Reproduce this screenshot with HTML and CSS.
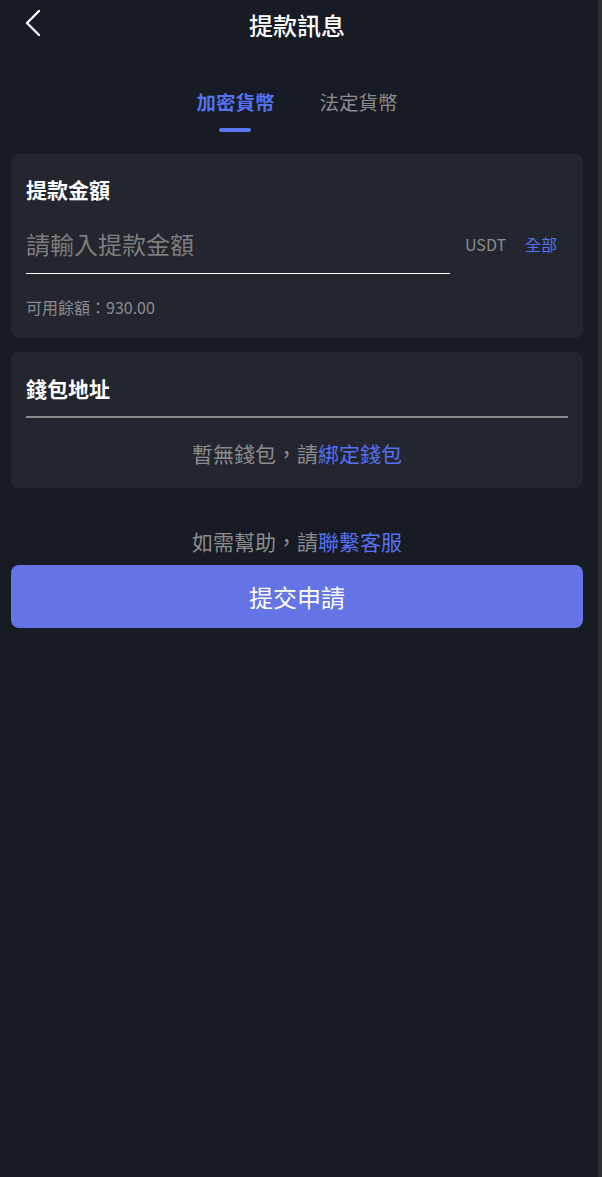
FILE: index.html
```html
<!DOCTYPE html>
<html lang="zh-Hant">
<head>
<meta charset="utf-8">
<link rel="stylesheet" href="styles.css">
</head>
<body>
<div class="page">
  <header class="topbar">
    <span class="back">
      <svg width="18" height="28" viewBox="0 0 18 28"><path d="M15 2 L3 14 L15 26" fill="none" stroke="#fff" stroke-width="2.4" stroke-linecap="round" stroke-linejoin="round"/></svg>
    </span>
    <h1 class="title">提款訊息</h1>
  </header>
  <nav class="tabs">
    <div class="tab active">加密貨幣<span class="indicator"></span></div>
    <div class="tab">法定貨幣</div>
  </nav>
  <section class="card amount">
    <div class="card-title">提款金額</div>
    <div class="input-row">
      <div class="input">請輸入提款金額</div>
      <span class="unit">USDT</span>
      <span class="all">全部</span>
    </div>
    <div class="balance">可用餘額：930.00</div>
  </section>
  <section class="card wallet">
    <div class="card-title">錢包地址</div>
    <div class="divider"></div>
    <div class="empty">暫無錢包，請<span class="link">綁定錢包</span></div>
  </section>
  <div class="help">如需幫助，請<span class="link">聯繫客服</span></div>
  <button class="submit">提交申請</button>
</div>
<div class="scrollbar"></div>
</body>
</html>
```
FILE: styles.css
```css
html, body {
  margin: 0;
  padding: 0;
  background: #161b24;
  height: 100%;
}
body {
  font-family: "Noto Sans CJK SC", "Noto Sans", sans-serif;
  color: #fff;
  display: flex;
  overflow: hidden;
}
.page {
  width: 594px;
  padding: 0 11px;
  box-sizing: border-box;
  display: flex;
  flex-direction: column;
}
.scrollbar {
  margin-left: 4px;
  width: 4px;
  background: #2a2c2f;
}
.topbar {
  position: relative;
  height: 50px;
  display: flex;
  align-items: center;
  justify-content: center;
}
.back {
  position: absolute;
  left: 13px;
  top: 9px;
  display: block;
  width: 18px;
  height: 28px;
}
.back svg { display: block; }
.title {
  margin: 0;
  font-size: 24px;
  font-weight: 500;
  line-height: 50px;
}
.tabs {
  display: flex;
  justify-content: center;
  gap: 45px;
  height: 104px;
  padding-top: 37px;
  box-sizing: border-box;
}
.tab {
  position: relative;
  font-size: 19.5px;
  line-height: 30px;
  color: #8c8c8c;
  height: 30px;
}
.tab.active {
  color: #5472f3;
  font-weight: 700;
}
.indicator {
  position: absolute;
  left: 50%;
  top: 41px;
  width: 32px;
  height: 4px;
  margin-left: -16px;
  border-radius: 2px;
  background: #5c76f6;
}
.card {
  background: #23262f;
  border-radius: 8px;
  padding: 0 15px;
}
.amount {
  height: 184px;
  box-sizing: border-box;
  padding-top: 21px;
}
.card-title {
  font-size: 21px;
  font-weight: 700;
  line-height: 28px;
}
.input-row {
  display: flex;
  align-items: flex-start;
  margin-top: 25px;
}
.input {
  width: 424px;
  font-size: 24px;
  color: #7d7d7d;
  line-height: 32px;
  padding-bottom: 13px;
  border-bottom: 1px solid #fff;
}
.unit {
  margin-left: 15px;
  font-size: 16px;
  line-height: 32px;
  color: #8c8c8c;
}
.all {
  margin-left: 19px;
  font-size: 16px;
  line-height: 32px;
  color: #5472f3;
}
.balance {
  margin-top: 22px;
  font-size: 16px;
  color: #8c8c8c;
  line-height: 22px;
}
.wallet {
  margin-top: 14px;
  height: 136px;
  box-sizing: border-box;
  padding-top: 22px;
}
.divider {
  height: 2px;
  background: #8a8a8a;
  margin-top: 14px;
}
.empty {
  text-align: center;
  font-size: 21px;
  line-height: 28px;
  color: #8c8c8c;
  margin-top: 21px;
}
.link { color: #5472f3; }
.help {
  text-align: center;
  font-size: 21px;
  line-height: 28px;
  color: #8c8c8c;
  margin-top: 39px;
}
.submit {
  margin-top: 10px;
  height: 63px;
  border: 0;
  border-radius: 8px;
  background: #6473e6;
  color: #fff;
  font-family: inherit;
  font-size: 24px;
  padding: 0;
}
```
